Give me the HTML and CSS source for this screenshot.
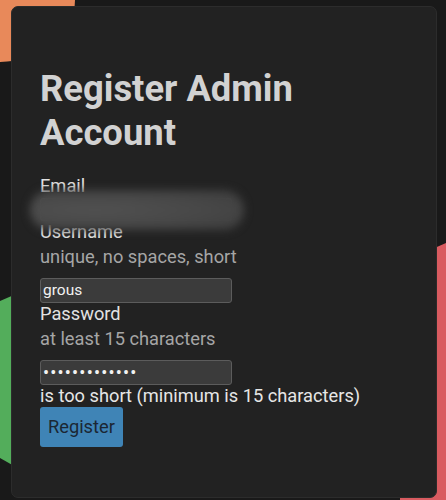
FILE: index.html
```html
<!DOCTYPE html>
<html lang="en">
<head>
<meta charset="utf-8">
<title>Register Admin Account</title>
<link rel="stylesheet" href="styles.css">
</head>
<body>
<div class="scene">
  <div class="deco deco-orange"></div>
  <div class="deco deco-green"></div>
  <div class="deco deco-red"></div>
  <main class="card">
    <h1 class="title">Register Admin Account</h1>
    <form class="form">
      <label class="label" for="email">Email</label>
      <input class="field field-email" id="email" type="email" value="">
      <label class="label" for="username">Username</label>
      <div class="hint">unique, no spaces, short</div>
      <input class="field field-gap" id="username" type="text" value="grous">
      <label class="label" for="password">Password</label>
      <div class="hint">at least 15 characters</div>
      <input class="field field-gap field-pass" id="password" type="password" value="abcdefghijklm">
      <div class="error">is too short (minimum is 15 characters)</div>
      <button class="btn" type="button">Register</button>
    </form>
    <div class="redact"></div>
  </main>
</div>
</body>
</html>
```

FILE: styles.css
```css
html, body {
  margin: 0;
  padding: 0;
}
body {
  background: #191919;
  font-family: Roboto, "Liberation Sans", sans-serif;
  width: 446px;
  height: 500px;
  overflow: hidden;
}
.scene {
  position: relative;
  width: 446px;
  height: 500px;
  padding-top: 6px;
  box-sizing: border-box;
}
.deco {
  position: absolute;
  z-index: 0;
}
.deco-orange {
  left: -76px;
  top: -62px;
  width: 151px;
  height: 124px;
  border-radius: 50%;
  background: #e8895a;
}
.deco-green {
  left: 0;
  top: 270px;
  width: 60px;
  height: 220px;
  background: #53ad5b;
  clip-path: polygon(0 31px, 60px 5px, 60px 222px, 0 188px);
}
.deco-red {
  left: 400px;
  top: 200px;
  width: 46px;
  height: 300px;
  background: #d95b60;
  clip-path: polygon(0 63px, 46px 43px, 46px 300px, 0 300px);
}
.card {
  position: relative;
  z-index: 1;
  margin-left: 11px;
  width: 426px;
  height: 492px;
  box-sizing: border-box;
  background: #222222;
  border: 1px solid #2c2c2c;
  border-radius: 7px;
  padding: 60px 28px 0 28px;
}
.title {
  margin: 0;
  font-size: 36.4px;
  line-height: 44px;
  font-weight: 700;
  color: #d2d2d2;
}
.form {
  margin-top: 20px;
  display: flex;
  flex-direction: column;
  align-items: flex-start;
}
.label, .hint, .error {
  font-size: 18.25px;
  line-height: 22.5px;
}
.label {
  color: #e2e2e2;
}
.hint {
  color: #a6a6a6;
  margin-top: 3px;
}
.error {
  color: #e6e6e6;
}
.field {
  box-sizing: border-box;
  width: 192px;
  height: 25px;
  margin: 0;
  padding: 0 2px;
  background: #3b3b3b;
  border: 1px solid #5c5c5c;
  border-radius: 3px;
  color: #f2f2f2;
  font-family: Roboto, "Liberation Sans", sans-serif;
  font-size: 15.5px;
  outline: none;
}
.field-email {
  height: 23px;
}
.field-gap {
  margin-top: 9px;
}
.field-pass {
  font-size: 18px;
  letter-spacing: 1.2px;
}
.btn {
  margin: 0;
  height: 40px;
  padding: 0 8px;
  background: #3f84b6;
  border: none;
  border-radius: 3px;
  color: #1b2733;
  font-family: Roboto, "Liberation Sans", sans-serif;
  font-size: 18.25px;
  line-height: 22px;
}
.redact {
  position: absolute;
  left: 18px;
  top: 183px;
  width: 214px;
  height: 40px;
  border-radius: 20px;
  background: radial-gradient(ellipse at 30% 50%, #515151 0%, #474747 55%, #3c3c3c 100%);
  filter: blur(4px);
}
```
